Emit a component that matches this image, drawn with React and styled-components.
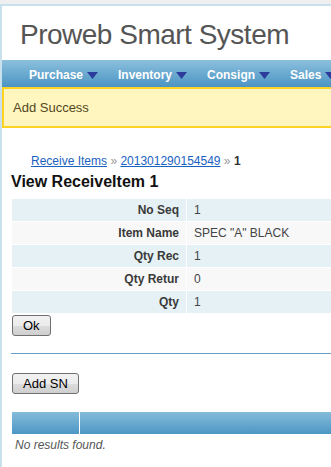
import React from 'react';
import styled, { createGlobalStyle } from 'styled-components';

const Global = createGlobalStyle`
  html, body { margin: 0; padding: 0; overflow: hidden; background: #efefef; }
  body { font-family: "Liberation Sans", Arial, sans-serif; font-size: 12px; color: #333; }
`;

const Page = styled.div`
  width: 950px;
  min-height: 700px;
  margin-top: 4px;
  background: #fff;
  border: 2px solid #c9e0ed;
`;

const Header = styled.div`
  padding: 13px 0 9px 18px;
`;

const Logo = styled.div`
  font-size: 28px;
  line-height: 32px;
  letter-spacing: -0.5px;
  color: #555;
`;

const Menu = styled.nav`
  display: flex;
  align-items: center;
  height: 27px;
  padding-left: 27px;
  background: linear-gradient(#8cc0dd, #4b94c3);
`;

const MenuItem = styled.a`
  display: flex;
  align-items: center;
  gap: 4px;
  margin-right: 20px;
  padding-top: 2px;
  color: #fff;
  font-weight: bold;
  font-size: 12px;
  line-height: 14px;
  text-decoration: none;
  white-space: nowrap;
`;

const Caret = styled.svg`
  width: 11px;
  height: 7px;
  margin-top: 2px;
`;

const Flash = styled.div`
  border: 2px solid #ffd324;
  background: #fff6bf;
  color: #514721;
  font-size: 13px;
  line-height: 15px;
  padding: 11px 9px;
`;

const Content = styled.div`
  padding-left: 9px;
`;

const Breadcrumbs = styled.div`
  margin-top: 26px;
  padding-left: 20px;
  line-height: 15px;
  font-size: 12px;
`;

const Crumb = styled.a`
  color: #1a62c0;
  text-decoration: underline;
`;

const Sep = styled.span`
  color: #999;
`;

const Current = styled.span`
  font-weight: bold;
  color: #333;
`;

const Title = styled.h1`
  margin: 3px 0 7px;
  font-size: 16px;
  line-height: 19px;
  font-weight: bold;
  color: #111;
`;

const DetailTable = styled.table`
  width: 100%;
  border-collapse: separate;
  border-spacing: 1px;
`;

const Row = styled.tr`
  background: ${p => (p.$odd ? '#e5f1f4' : '#f8f8f8')};
`;

const Label = styled.th`
  width: 160px;
  height: 22px;
  padding: 0 7px;
  text-align: right;
  font-weight: bold;
  font-size: 12px;
  color: #3a3a3a;
`;

const Value = styled.td`
  height: 22px;
  padding: 0 7px;
  text-align: left;
  font-size: 12px;
  color: #444;
`;

const Button = styled.button`
  display: block;
  height: 21px;
  margin: ${p => p.$mt}px 0 0 1px;
  padding: 0 10px;
  font-family: "Liberation Sans", Arial, sans-serif;
  font-size: 13px;
  color: #000;
  border: 1px solid #707070;
  border-radius: 3px;
  background: linear-gradient(#f2f2f2 0%, #ebebeb 50%, #dddddd 51%, #cfcfcf 100%);
`;

const Rule = styled.div`
  height: 1px;
  margin-top: 17px;
  background: #6b9dc8;
`;

const Grid = styled.table`
  width: 100%;
  margin-top: 18px;
  border-collapse: separate;
  border-spacing: 1px 0;
`;

const HeadCell = styled.th`
  height: 22px;
  padding: 0;
  width: ${p => p.$w || 'auto'};
  background: linear-gradient(#85bcda, #4c97c5);
`;

const Empty = styled.td`
  padding: 4px 3px;
  font-style: italic;
  font-size: 12px;
  line-height: 15px;
  color: #555;
`;

const Triangle = () => (
  <Caret viewBox="0 0 11 7">
    <polygon points="0,0 11,0 5.5,7" fill="#2b3c9c" />
  </Caret>
);

const menu = ['Purchase', 'Inventory', 'Consign', 'Sales'];

const details = [
  ['No Seq', '1'],
  ['Item Name', 'SPEC "A" BLACK'],
  ['Qty Rec', '1'],
  ['Qty Retur', '0'],
  ['Qty', '1'],
];

export default function App() {
  return (
    <>
      <Global />
      <Page>
        <Header>
          <Logo>Proweb Smart System</Logo>
        </Header>
        <Menu>
          {menu.map(m => (
            <MenuItem key={m}>
              {m}
              <Triangle />
            </MenuItem>
          ))}
        </Menu>
        <Flash>Add Success</Flash>
        <Content>
          <Breadcrumbs>
            <Crumb href="#">Receive Items</Crumb> <Sep>»</Sep>{' '}
            <Crumb href="#">201301290154549</Crumb> <Sep>»</Sep>{' '}
            <Current>1</Current>
          </Breadcrumbs>
          <Title>View ReceiveItem 1</Title>
          <DetailTable>
            <tbody>
              {details.map(([k, v], i) => (
                <Row key={k} $odd={i % 2 === 0}>
                  <Label>{k}</Label>
                  <Value>{v}</Value>
                </Row>
              ))}
            </tbody>
          </DetailTable>
          <Button $mt={1}>Ok</Button>
          <Rule />
          <Button $mt={19}>Add SN</Button>
          <Grid>
            <thead>
              <tr>
                <HeadCell $w="67px" />
                <HeadCell />
              </tr>
            </thead>
            <tbody>
              <tr>
                <Empty colSpan={2}>No results found.</Empty>
              </tr>
            </tbody>
          </Grid>
        </Content>
      </Page>
    </>
  );
}
